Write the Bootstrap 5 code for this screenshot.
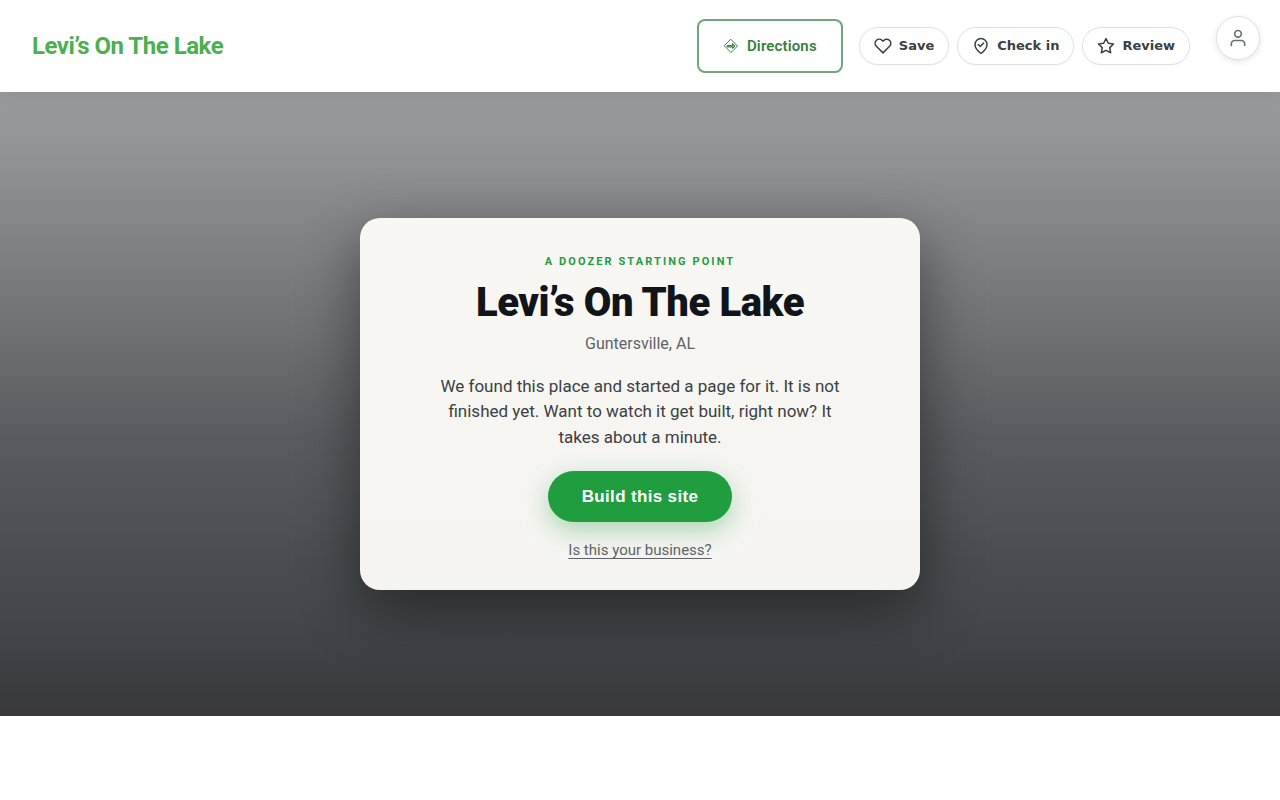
<!DOCTYPE html>
<html lang="en">
<head>
<meta charset="utf-8">
<meta name="viewport" content="width=device-width, initial-scale=1">
<title>Levi’s On The Lake</title>
<link href="https://cdn.jsdelivr.net/npm/bootstrap@5.3.0/dist/css/bootstrap.min.css" rel="stylesheet">
<style>
  body { font-family: Roboto, "Liberation Sans", sans-serif; background: #fff; }
  .site-header { min-height: 92px; padding: 16px 20px 16px 32px; box-shadow: 0 2px 20px rgba(0, 0, 0, .08); z-index: 2; }
  .site-name { color: #4caf50; font-size: 24px; font-weight: 700; line-height: 28px; letter-spacing: -.02em; }
  .btn-directions {
    --bs-btn-color: #35803f; --bs-btn-border-color: #6fa67a; --bs-btn-border-width: 2px;
    --bs-btn-hover-color: #fff; --bs-btn-hover-bg: #2e7d32;
    --bs-btn-padding-x: 24px; --bs-btn-padding-y: 13px; --bs-btn-border-radius: 8px;
    --bs-btn-font-size: 15px; --bs-btn-font-weight: 600; --bs-btn-line-height: 24px;
    letter-spacing: .01em;
  }
  .btn-pill {
    --bs-btn-color: #3c4043; --bs-btn-bg: #fff; --bs-btn-border-color: #dfe1e5;
    --bs-btn-hover-bg: #f5f6f7; --bs-btn-hover-border-color: #dfe1e5;
    --bs-btn-padding-x: 14px; --bs-btn-padding-y: 8px;
    --bs-btn-font-size: 13px; --bs-btn-font-weight: 700; --bs-btn-line-height: 20px;
    font-family: "DejaVu Sans", sans-serif; gap: 7px; box-shadow: 0 1px 2px rgba(0, 0, 0, .04);
  }
  .btn-account {
    --bs-btn-color: #6b7075; --bs-btn-bg: #fff; --bs-btn-border-color: #dfe1e5; --bs-btn-padding-x: 0; --bs-btn-padding-y: 0;
    width: 44px; height: 44px; margin-left: 26px; box-shadow: 0 2px 6px rgba(0, 0, 0, .1);
  }
  .line-icon { fill: none; stroke: currentColor; stroke-width: 2; stroke-linecap: round; stroke-linejoin: round; flex: none; }
  .line-icon.directions-icon { stroke-width: 1; }
  .hero {
    min-height: 78vh;
    background: linear-gradient(#999a9b 0%, #97989a 5%, #818283 24%, #707174 38%, #5a5b60 55%, #4b4e52 73%, #3f4246 90%, #37393b 100%);
  }
  .start-card { max-width: 560px; padding: 36px 32px 30px; border-radius: 20px; background: linear-gradient(#f8f7f4, #f5f4f1); box-shadow: 0 20px 60px rgba(0, 0, 0, .45); }
  .eyebrow { color: #1f9d3f; font-size: 11px; font-weight: 700; line-height: 16px; letter-spacing: .19em; }
  .start-title { color: #111418; font-size: 40px; font-weight: 900; line-height: 44px; letter-spacing: -.01em; margin: 11px 0 7px; }
  .place { color: #5f6368; font-size: 16px; line-height: 24px; margin-bottom: 18px; }
  .pitch { color: #3c4043; font-size: 17px; line-height: 1.5; max-width: 416px; margin-bottom: 21px; }
  .btn-build {
    --bs-btn-color: #fff; --bs-btn-bg: #1f9d3f; --bs-btn-border-width: 0;
    --bs-btn-hover-color: #fff; --bs-btn-hover-bg: #1a8736;
    --bs-btn-padding-x: 34px; --bs-btn-padding-y: 15px;
    --bs-btn-font-size: 17px; --bs-btn-font-weight: 700; --bs-btn-line-height: 21px;
    font-family: "Liberation Sans", sans-serif; letter-spacing: .02em; box-shadow: 0 8px 24px rgba(31, 157, 63, .35);
  }
  .claim-link { color: #5f6368; font-size: 15px; line-height: 20px; text-underline-offset: 3px; margin-top: 18px; }
</style>
</head>
<body>
<header class="site-header d-flex flex-wrap align-items-center bg-white position-relative">
  <a class="site-name text-decoration-none me-auto" href="#">Levi’s On The Lake</a>
  <button type="button" class="btn btn-directions d-flex align-items-center gap-2 me-3">
    <svg class="line-icon directions-icon" width="16" height="16" viewBox="0 0 16 16"><path d="M8 1.500 14.500 8 8 14.500 1.500 8Z"/><path d="M4.500 7.500h5V5.500L12 8l-2.500 2.500V9h-5Z" fill="currentColor" fill-opacity=".6"/></svg>
    Directions
  </button>
  <div class="d-flex gap-2">
    <button type="button" class="btn btn-pill rounded-pill d-flex align-items-center">
      <svg class="line-icon" width="18" height="18" viewBox="0 0 24 24"><path d="M20.8 4.6a5.5 5.5 0 0 0-7.8 0L12 5.7l-1.1-1.1a5.5 5.5 0 0 0-7.8 7.8L12 21.2l8.8-8.8a5.5 5.5 0 0 0 0-7.8Z"/></svg>
      Save
    </button>
    <button type="button" class="btn btn-pill rounded-pill d-flex align-items-center">
      <svg class="line-icon" width="18" height="18" viewBox="0 0 24 24"><path d="M12 22s8-6 8-12a8 8 0 0 0-16 0c0 6 8 12 8 12Z"/><path d="m8.5 10.2 2.5 2.5 4.5-4.7"/></svg>
      Check in
    </button>
    <button type="button" class="btn btn-pill rounded-pill d-flex align-items-center">
      <svg class="line-icon" width="18" height="18" viewBox="0 0 24 24"><path d="m12 2 3.1 6.3 6.9 1-5 4.9 1.2 6.8-6.2-3.2L5.8 21 7 14.2 2 9.3l6.900-1Z"/></svg>
      Review
    </button>
  </div>
  <button type="button" class="btn btn-account rounded-circle d-flex align-items-center justify-content-center align-self-start" aria-label="Account">
    <svg class="line-icon" width="20" height="20" viewBox="0 0 24 24"><circle cx="12" cy="7" r="4"/><path d="M20 21v-2a4 4 0 0 0-4-4H8a4 4 0 0 0-4 4v2"/></svg>
  </button>
</header>
<main class="hero d-flex align-items-center justify-content-center px-3">
  <section class="start-card w-100 d-flex flex-column align-items-center text-center">
    <div class="eyebrow text-uppercase">A Doozer starting point</div>
    <h1 class="start-title">Levi’s On The Lake</h1>
    <p class="place">Guntersville, AL</p>
    <p class="pitch">We found this place and started a page for it. It is not finished yet. Want to watch it get built, right now? It takes about a minute.</p>
    <button type="button" class="btn btn-build rounded-pill">Build this site</button>
    <a class="claim-link" href="#">Is this your business?</a>
  </section>
</main>
<script src="https://cdn.jsdelivr.net/npm/bootstrap@5.3.0/dist/js/bootstrap.bundle.min.js"></script>
</body>
</html>
